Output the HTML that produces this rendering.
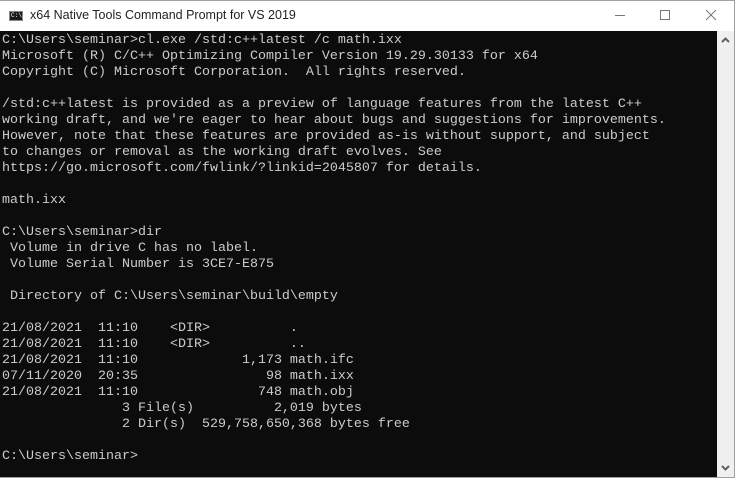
<!DOCTYPE html>
<html><head><meta charset="utf-8"><style>
html,body{margin:0;padding:0;width:735px;height:478px;overflow:hidden;background:#fff}
.win{position:absolute;left:0;top:0;border-right:1px solid #a0a0a0;border-bottom:1px solid #a0a0a0;border-top:1px solid #a0a0a0;box-sizing:border-box;width:735px;height:478px}
.title{position:absolute;left:30px;top:8px;font:12.5px "Liberation Sans",sans-serif;color:#222}
.icon{position:absolute;left:9px;top:11px;width:14px;height:10px;background:#1a1a1a;border:1px solid #888;box-sizing:border-box}
.icon span{position:absolute;left:1px;top:1px;font:6px "Liberation Mono",monospace;color:#fff;line-height:6px}
.con{position:absolute;left:0;top:31px;width:717px;height:446px;background:#0c0c0c}
pre{margin:0;position:absolute;left:2px;top:2px;font:13.33px/16px "Liberation Mono",monospace;color:#cccccc}
.sb{position:absolute;left:717px;top:31px;width:17px;height:446px;background:#f0f0f0}
</style></head><body>
<div class="win"></div>
<div class="icon"><span>C:\_</span></div>
<div class="title">x64 Native Tools Command Prompt for VS 2019</div>
<svg style="position:absolute;left:600px;top:0" width="134" height="30">
<line x1="15" y1="15.5" x2="25" y2="15.5" stroke="#777" stroke-width="1"/>
<rect x="60.5" y="10.5" width="9" height="9" fill="none" stroke="#777"/>
<line x1="106" y1="10" x2="116" y2="20" stroke="#777"/>
<line x1="116" y1="10" x2="106" y2="20" stroke="#777"/>
</svg>
<div class="con"><pre>C:\Users\seminar>cl.exe /std:c++latest /c math.ixx
Microsoft (R) C/C++ Optimizing Compiler Version 19.29.30133 for x64
Copyright (C) Microsoft Corporation.  All rights reserved.

/std:c++latest is provided as a preview of language features from the latest C++
working draft, and we're eager to hear about bugs and suggestions for improvements.
However, note that these features are provided as-is without support, and subject
to changes or removal as the working draft evolves. See
https://go.microsoft.com/fwlink/?linkid=2045807 for details.

math.ixx

C:\Users\seminar>dir
 Volume in drive C has no label.
 Volume Serial Number is 3CE7-E875

 Directory of C:\Users\seminar\build\empty

21/08/2021  11:10    &lt;DIR>          .
21/08/2021  11:10    &lt;DIR>          ..
21/08/2021  11:10             1,173 math.ifc
07/11/2020  20:35                98 math.ixx
21/08/2021  11:10               748 math.obj
               3 File(s)          2,019 bytes
               2 Dir(s)  529,758,650,368 bytes free

C:\Users\seminar></pre></div>
<div class="sb">
<svg width="17" height="446" style="position:absolute;left:0;top:0">
<polyline points="5,11 8.5,7.5 12,11" fill="none" stroke="#606060" stroke-width="2"/>
<polyline points="5,435 8.5,438.5 12,435" fill="none" stroke="#606060" stroke-width="2"/>
</svg>
</div>
</body></html>
